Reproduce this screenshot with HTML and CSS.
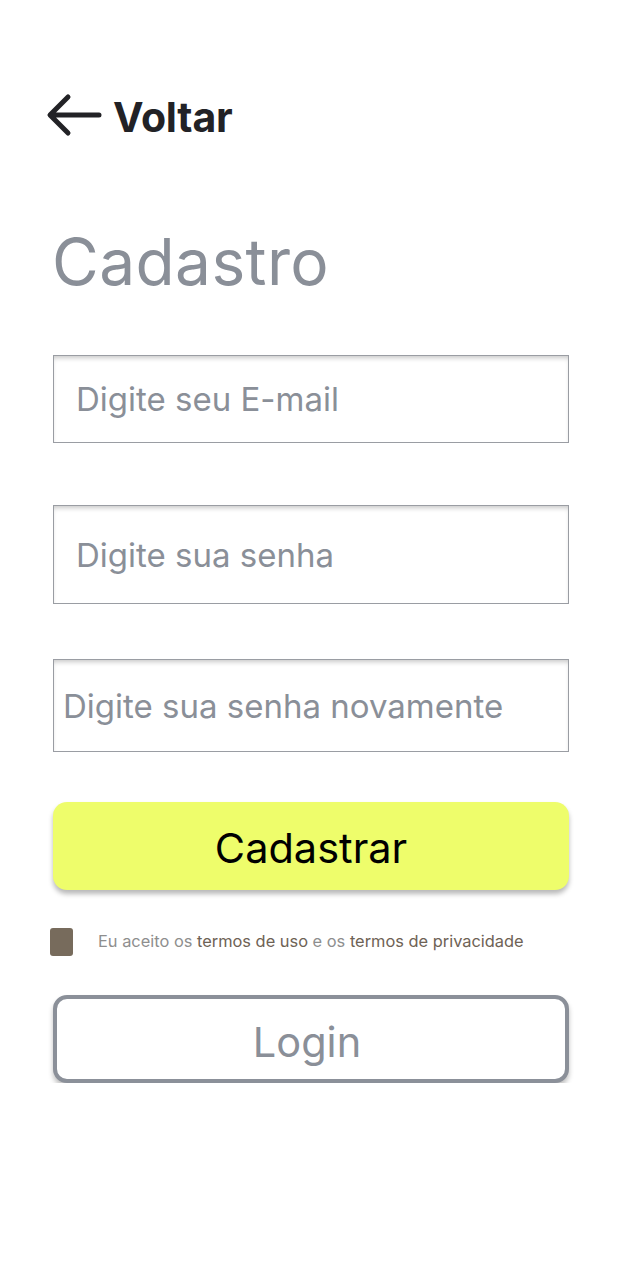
FILE: index.html
```html
<!DOCTYPE html>
<html lang="pt-BR">
<head>
<meta charset="utf-8">
<title>Cadastro</title>
<link rel="stylesheet" href="styles.css">
</head>
<body>
<main class="page">
  <a class="back" href="#">
    <svg class="back-icon" width="56" height="44" viewBox="0 0 56 44" aria-hidden="true">
      <path d="M53 22H5M22 4L4 22L22 40" fill="none" stroke="#222226" stroke-width="5" stroke-linecap="round" stroke-linejoin="round"/>
    </svg>
    <span class="back-text">Voltar</span>
  </a>
  <h1 class="title">Cadastro</h1>
  <form class="form">
    <input class="field field-1" type="email" placeholder="Digite seu E-mail">
    <input class="field field-2" type="password" placeholder="Digite sua senha">
    <input class="field field-3" type="password" placeholder="Digite sua senha novamente">
    <button class="btn btn-primary" type="button">Cadastrar</button>
    <label class="terms">
      <span class="box"></span>
      <span class="terms-text">Eu aceito os <span class="link">termos de uso</span> e os <span class="link">termos de privacidade</span></span>
    </label>
    <button class="btn btn-outline" type="button">Login</button>
  </form>
</main>
</body>
</html>
```
FILE: styles.css
```css
* { box-sizing: border-box; }
html, body { margin: 0; padding: 0; background: #fff; }
body { font-family: Inter, "Noto Sans", sans-serif; }
.page { padding: 93px 0 0 53px; }
.back {
  display: flex; align-items: center; gap: 11px;
  margin-left: -7px; height: 44px;
  text-decoration: none; color: #222226;
  font-weight: 700; font-size: 41px; letter-spacing: -0.2px;
}
.back-text { padding-top: 3px; }
.back-icon { display: block; flex: none; }
.title {
  margin: 86px 0 0 -1px; font-weight: 400; font-size: 64px; line-height: 77px;
  color: #8a8f98; letter-spacing: 0.4px;
}
.form { display: flex; flex-direction: column; width: 516px; margin-top: 55px; }
.field {
  display: block; width: 516px; border: 1px solid #9a9da3; border-radius: 0;
  background: #fff; font-family: inherit; font-size: 33px; color: #333;
  padding: 0 0 0 22px; outline: none;
  box-shadow: inset 0 4px 5px -2px rgba(0,0,0,0.22);
}
.field::placeholder { color: #8a8f98; opacity: 1; }
.field-1 { height: 88px; }
.field-2 { height: 99px; margin-top: 62px; }
.field-3 { height: 93px; margin-top: 55px; padding-left: 9px; }
.btn {
  display: flex; align-items: center; justify-content: center;
  width: 516px; height: 88px; border-radius: 14px;
  font-family: inherit; font-size: 41.5px; font-weight: 400; cursor: pointer;
}
.btn-primary {
  margin-top: 50px; background: #eefd6b; border: none; color: #000;
  box-shadow: 0 4px 5px rgba(0,0,0,0.28); padding-top: 5px;
}
.terms { display: flex; align-items: center; gap: 25px; margin: 37px 0 0 -3px; height: 30px; }
.box { width: 23px; height: 28px; background: #776b5c; border-radius: 3px; flex: none; }
.terms-text { font-size: 16.4px; color: #8e8e8e; margin-top: -2px; }
.link { color: #6e6255; }
.btn-outline {
  margin-top: 38px; background: #fff; border: 4px solid #8b9099; color: #8a8f98;
  box-shadow: 0 4px 5px rgba(0,0,0,0.25); padding: 6px 8px 0 0;
}
```
